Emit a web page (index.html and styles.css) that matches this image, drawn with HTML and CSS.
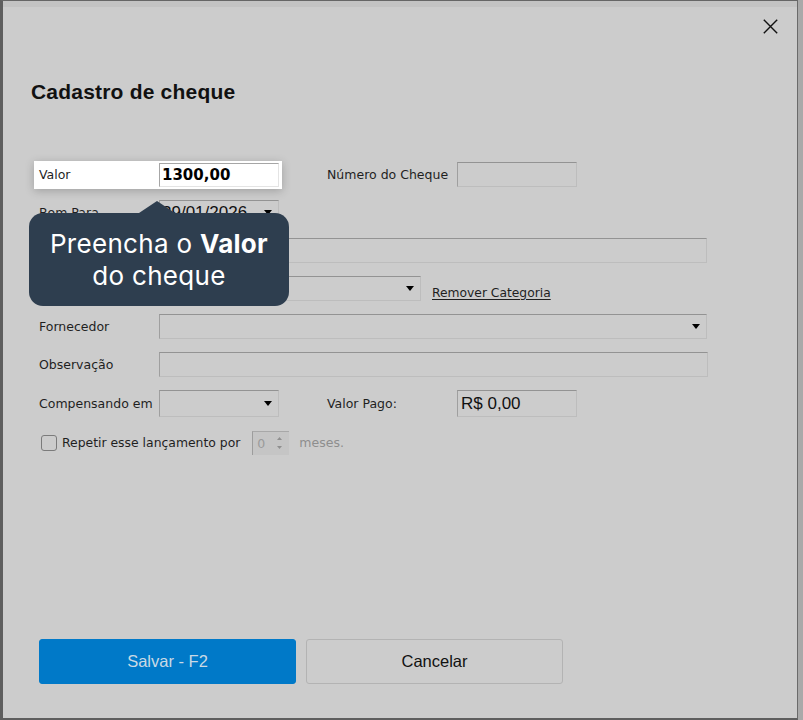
FILE: index.html
```html
<!DOCTYPE html>
<html lang="pt-BR">
<head>
<meta charset="utf-8">
<title>Cadastro de cheque</title>
<link rel="stylesheet" href="styles.css">
</head>
<body>
<div class="frame">
  <div class="band"></div>
  <div class="dialog">
    <div class="header">
      <button class="close" aria-label="Fechar">
        <svg width="15" height="15" viewBox="0 0 15 15"><path d="M0.8 0.8 L14.2 14.2 M14.2 0.8 L0.8 14.2" stroke="#111" stroke-width="1.4" fill="none"/></svg>
      </button>
    </div>
    <h1 class="title">Cadastro de cheque</h1>
    <div class="form">
      <div class="row">
        <div class="hl">
          <span class="lbl">Valor</span>
          <div class="input input-hl value">1300,00</div>
        </div>
        <span class="lbl lbl2">Número do Cheque</span>
        <div class="input w120"></div>
      </div>
      <div class="row">
        <span class="lbl">Bom Para</span>
        <div class="input select w120 big"><span>29/01/2026</span><span class="caret"></span></div>
      </div>
      <div class="row">
        <span class="lbl"></span>
        <div class="input wfull"></div>
      </div>
      <div class="row">
        <span class="lbl"></span>
        <div class="input select w262"><span></span><span class="caret"></span></div>
        <a class="link" href="#">Remover Categoria</a>
      </div>
      <div class="row">
        <span class="lbl">Fornecedor</span>
        <div class="input select wfull"><span></span><span class="caret"></span></div>
      </div>
      <div class="row">
        <span class="lbl">Observação</span>
        <div class="input wfull2"></div>
      </div>
      <div class="row tall">
        <span class="lbl">Compensando em</span>
        <div class="input select w120"><span></span><span class="caret"></span></div>
        <span class="lbl lbl2">Valor Pago:</span>
        <div class="input w120 big pago">R$ 0,00</div>
      </div>
      <div class="row">
        <span class="check"></span>
        <span class="check-lbl">Repetir esse lançamento por</span>
        <div class="spin">
          <span>0</span>
          <svg width="7" height="16" viewBox="0 0 7 16"><path d="M3.5 2 L6 5 L1 5 Z" fill="#8f8f8f"/><path d="M1 11 L6 11 L3.5 14 Z" fill="#8f8f8f"/></svg>
        </div>
        <span class="muted">meses.</span>
      </div>
    </div>
    <div class="footer">
      <button class="btn btn-primary">Salvar - F2</button>
      <button class="btn btn-default">Cancelar</button>
    </div>
  </div>
  <div class="tooltip">Preencha o <b>Valor</b><br>do cheque</div>
</div>
</body>
</html>
```

FILE: styles.css
```css
html, body {
  margin: 0;
  padding: 0;
}
body {
  background: #a9a9a9;
  width: 803px;
  height: 720px;
  overflow: hidden;
  font-family: "DejaVu Sans", Verdana, sans-serif;
  color: #1f1f1f;
}
.frame {
  position: relative;
  box-sizing: border-box;
  width: 798px;
  height: 720px;
  border-left: 3px solid #5e5e5e;
  border-top: 1px solid #666;
  border-right: 1px solid #6a6a6a;
  border-bottom: 2px solid #5e5e5e;
  display: flex;
  flex-direction: column;
  background: #cccccc;
}
.band {
  height: 6px;
  background: #c3c3c3;
  flex: none;
}
.dialog {
  flex: 1;
  display: flex;
  flex-direction: column;
}
.header {
  display: flex;
  justify-content: flex-end;
  padding: 12px 19px 0 0;
}
.close {
  border: 0;
  padding: 0;
  margin: 0;
  background: transparent;
  width: 15px;
  height: 15px;
  display: block;
}
.close svg { display: block; }
.title {
  margin: 46px 0 0;
  padding-left: 28px;
  font-family: "Liberation Sans", Arial, sans-serif;
  font-weight: bold;
  font-size: 21px;
  line-height: 24px;
  letter-spacing: 0.2px;
  color: #111;
}
.form {
  margin-top: 58px;
  padding-left: 36px;
  display: flex;
  flex-direction: column;
  gap: 13px;
}
.row {
  display: flex;
  align-items: center;
  height: 25px;
}
.row.tall { height: 27px; }
.row.tall .input { height: 27px; }
.lbl {
  width: 120px;
  flex: none;
  font-size: 12.5px;
  white-space: nowrap;
}
.lbl2 {
  margin-left: 48px;
  width: 130px;
}
.hl {
  display: flex;
  align-items: center;
  background: #fff;
  margin: -2px -3px -2px -5px;
  padding: 2px 3px 2px 5px;
  box-shadow: 0 2px 10px rgba(0, 0, 0, 0.22);
}
.input {
  box-sizing: border-box;
  height: 25px;
  flex: none;
  border: 1px solid;
  border-color: #939393 #bdbdbd #bdbdbd #9f9f9f;
  background: transparent;
}
.input-hl {
  width: 120px;
  height: 24px;
  background: #fff;
  border-color: #a6a6a6 #e4e4e4 #e4e4e4 #a6a6a6;
}
.value {
  font-weight: bold;
  font-size: 15px;
  color: #000;
  padding-left: 2px;
  display: flex;
  align-items: center;
}
.w120 { width: 120px; }
.w262 { width: 262px; }
.wfull { width: 548px; }
.wfull2 { width: 549px; }
.big {
  font-family: "Liberation Sans", Arial, sans-serif;
  font-size: 17px;
  color: #111;
  padding-left: 2px;
  display: flex;
  align-items: center;
}
.pago { padding-left: 3px; }
.select {
  display: flex;
  align-items: center;
  justify-content: space-between;
  padding-right: 6px;
}
.caret {
  width: 0;
  height: 0;
  border-left: 4.5px solid transparent;
  border-right: 4.5px solid transparent;
  border-top: 5px solid #000;
}
.link {
  margin-left: 11px;
  margin-top: 8px;
  font-size: 12.3px;
  color: #1f1f1f;
  text-decoration: underline;
  text-underline-offset: 2px;
}
.check {
  box-sizing: border-box;
  width: 16px;
  height: 16px;
  margin-left: 2px;
  border: 1px solid #7b7b7b;
  border-radius: 3px;
  flex: none;
}
.check-lbl {
  margin-left: 5px;
  font-size: 12.4px;
  white-space: nowrap;
}
.spin {
  box-sizing: border-box;
  width: 37px;
  height: 24px;
  margin-left: 12px;
  background: #c5c5c5;
  border-left: 1px solid #9d9d9d;
  border-top: 1px solid #a8a8a8;
  display: flex;
  align-items: center;
  justify-content: space-between;
  padding: 0 6px 0 4px;
  font-size: 12.5px;
  color: #9a9a9a;
}
.spin svg { display: block; }
.muted {
  margin-left: 10px;
  font-size: 12.5px;
  color: #8e8e8e;
}
.footer {
  margin-top: auto;
  padding: 0 0 34px 36px;
  display: flex;
  gap: 10px;
}
.btn {
  box-sizing: border-box;
  width: 257px;
  height: 45px;
  border-radius: 3px;
  font-family: "Liberation Sans", Arial, sans-serif;
  font-size: 16.5px;
  padding: 0;
}
.btn-primary {
  background: #0079c8;
  border: 1px solid #0079c8;
  color: #cad9e5;
}
.btn-default {
  background: #cccccc;
  border: 1px solid #b3b3b3;
  color: #111;
}
.tooltip {
  position: absolute;
  left: 26px;
  top: 212px;
  width: 260px;
  box-sizing: border-box;
  padding: 15px 0 14px;
  background: #2e3e4f;
  border-radius: 14px;
  color: #fff;
  font-family: Inter, "Noto Sans", sans-serif;
  font-size: 26px;
  line-height: 32px;
  text-align: center;
  letter-spacing: 0.3px;
}
.tooltip b { font-weight: 700; }
.tooltip::before {
  content: "";
  position: absolute;
  left: 110px;
  top: -12px;
  width: 0;
  height: 0;
  border-left: 18px solid transparent;
  border-right: 18px solid transparent;
  border-bottom: 12px solid #2e3e4f;
}
```
